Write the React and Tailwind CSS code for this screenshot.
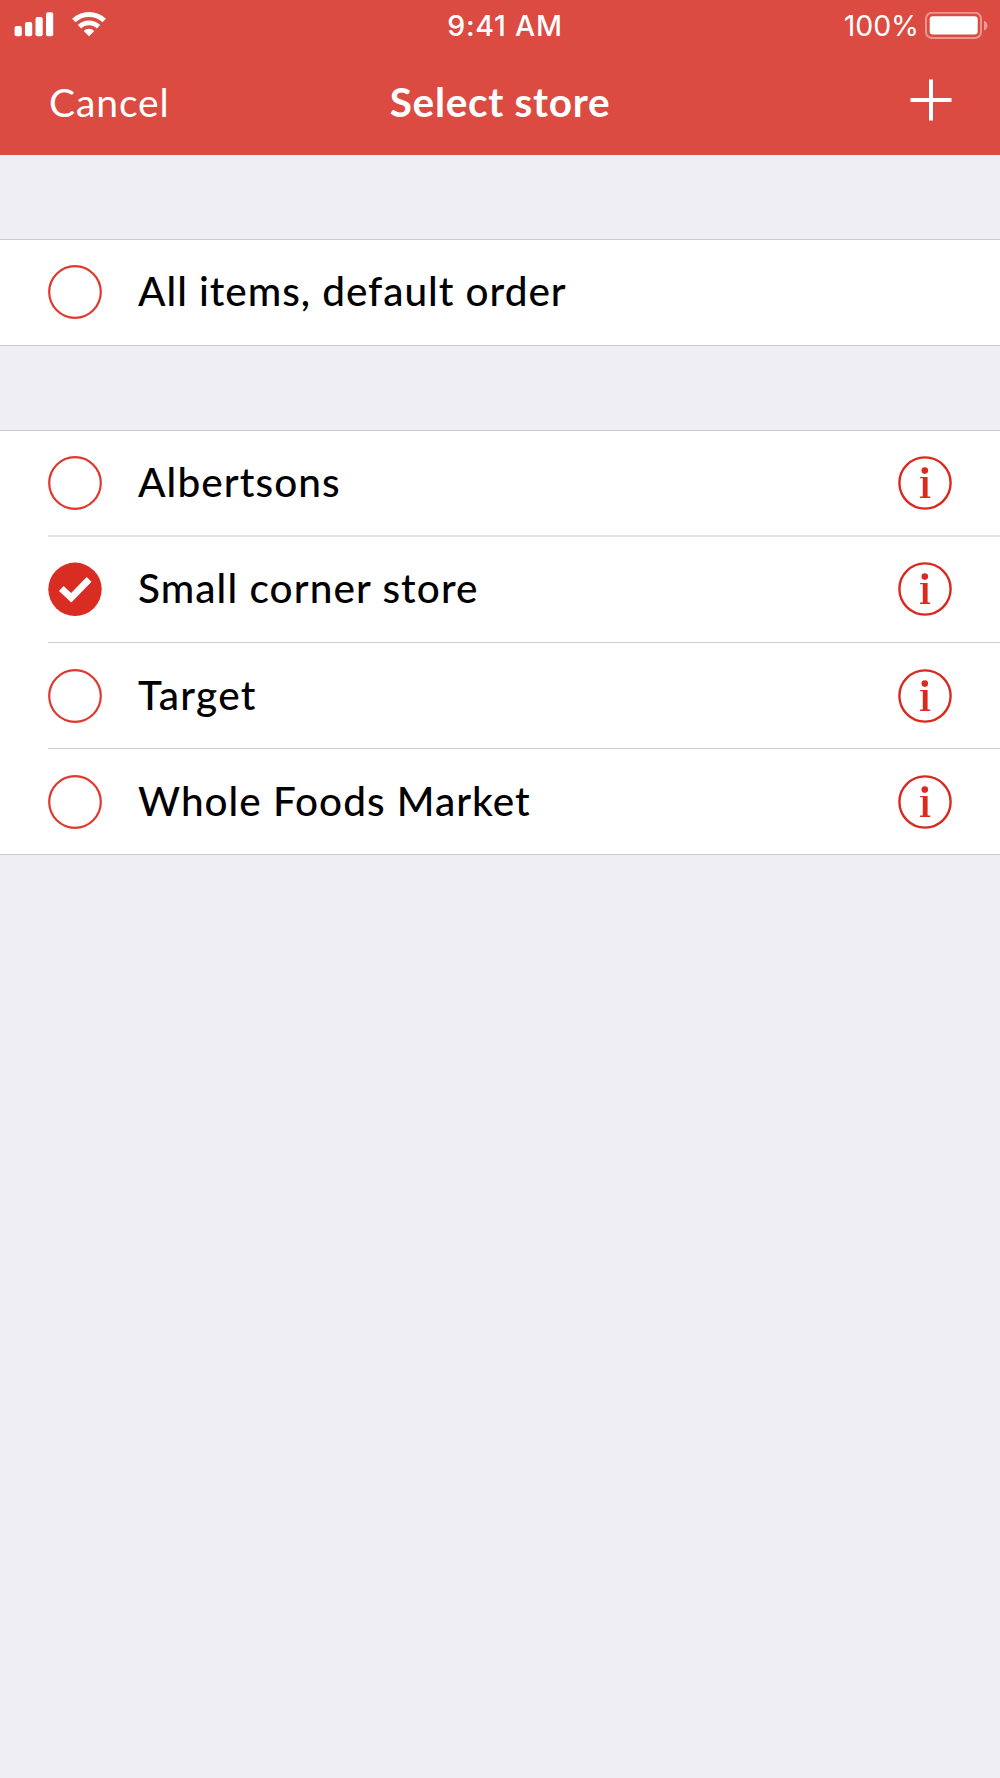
import { useState } from "react";

const stores = [
  { name: "Albertsons", row: "h-[104px]", line: "h-[2px] bg-[#e4e4e5]", spacing: "tracking-[1.1px]" },
  { name: "Small corner store", row: "h-[105px]", line: "h-px bg-[#cdcdcf]", spacing: "tracking-[1.1px]" },
  { name: "Target", row: "h-[105px] pt-[2px]", line: "h-px bg-[#cdcdcf]", spacing: "tracking-[1.3px]" },
  { name: "Whole Foods Market", row: "h-[105px] pt-[2px]", line: "", spacing: "tracking-[1px]" },
];

const SignalIcon = () => (
  <svg className="w-[40px] h-[25px]" viewBox="0 0 40 25" fill="white">
    <rect x="0.6" y="14" width="7.2" height="10.3" rx="2" />
    <rect x="11" y="10" width="7.2" height="14.3" rx="2" />
    <rect x="21.5" y="5" width="7.2" height="19.3" rx="2" />
    <rect x="32" y="0.2" width="7.2" height="24.1" rx="2" />
  </svg>
);

const WifiIcon = () => (
  <svg className="w-[34px] h-[25px]" viewBox="0 0 34 25" fill="none">
    <path d="M1.8 8.6a22 22 0 0 1 30.4 0" stroke="white" strokeWidth="4.9" />
    <path d="M7.5 14.8a13.6 13.6 0 0 1 19 0" stroke="white" strokeWidth="4.7" />
    <path d="M17 24.3l-5.3-5.3a7.6 7.6 0 0 1 10.6 0z" fill="white" />
  </svg>
);

const BatteryIcon = () => (
  <svg className="w-[64px] h-[28px]" viewBox="0 0 64 28" fill="none">
    <rect x="1" y="0.8" width="55" height="25.2" rx="6" stroke="white" strokeOpacity="0.42" strokeWidth="2" />
    <rect x="4.7" y="4.2" width="48" height="18.3" rx="3" fill="white" />
    <path d="M59 8.7c4.6 1.4 4.6 8.4 0 9.8z" fill="white" fillOpacity="0.45" />
  </svg>
);

const Check = ({ checked }) => (
  <svg className="w-[54px] h-[54px] -mt-[1px] shrink-0" viewBox="0 0 54 54" fill="none">
    {checked ? (
      <>
        <circle cx="27" cy="27.3" r="26.7" fill="#d92c23" />
        <path d="M13.3 26.5L23.2 35.8L41.1 17.3" stroke="white" strokeWidth="6.8" />
      </>
    ) : (
      <circle cx="27" cy="27" r="25.8" stroke="#e0382f" strokeWidth="2.2" />
    )}
  </svg>
);

const InfoIcon = () => (
  <svg className="w-[54px] h-[54px] -mt-[1px] shrink-0" viewBox="0 0 54 54" fill="none">
    <circle cx="27" cy="27" r="25.6" stroke="#da291f" strokeWidth="2.4" />
    <circle cx="26.8" cy="14.6" r="3.3" fill="#da291f" />
    <path
      d="M22.1 20.9h7.5v19.7h2.6v1.4H22.1v-1.4h2.7V22.3h-2.7z"
      fill="#da291f"
    />
  </svg>
);

const Row = ({ label, spacing, checked, onSelect, info }) => (
  <>
    <button onClick={onSelect} className="flex flex-1 items-center text-left">
      <Check checked={checked} />
      <span
        className={`ml-[36px] -mt-[3px] text-[40.5px] leading-[50px] font-medium whitespace-nowrap text-black ${spacing}`}
      >
        {label}
      </span>
    </button>
    {info && (
      <button>
        <InfoIcon />
      </button>
    )}
  </>
);

export default function App() {
  const [selected, setSelected] = useState("Small corner store");

  return (
    <div className="w-[1000px] h-[1778px] overflow-hidden bg-[#efeef4] font-['Lato',sans-serif]">
      <header className="h-[155px] bg-[#db4b42] text-white">
        {/* Status bar */}
        <div className="grid grid-cols-[1fr_auto_1fr] h-[50px] items-center pl-[14px] pr-[11px] font-['Inter',sans-serif] text-[28px] leading-[50px]">
          <div className="flex items-center gap-[18px] -mt-[2px]">
            <SignalIcon />
            <WifiIcon />
          </div>
          <span className="ml-[7px] pt-[1px] text-[28.5px] font-medium tracking-[0.75px]">9:41 AM</span>
          <div className="flex items-center justify-end gap-[6px]">
            <span className="pt-[1px] text-[28.5px] tracking-[-0.1px]">100%</span>
            <BatteryIcon />
          </div>
        </div>

        {/* Navigation */}
        <nav className="grid grid-cols-[1fr_auto_1fr] h-[105px] items-center pl-[48px] pr-[48px]">
          <button className="ml-[1px] -mt-[2px] justify-self-start text-[39px] leading-[50px] tracking-[0.9px]">
            Cancel
          </button>
          <h1 className="-mt-[2px] text-[40.5px] leading-[50px] font-bold tracking-[0.72px]">Select store</h1>
          <button className="justify-self-end">
            <svg className="w-[42px] h-[42px] -mt-[5px]" viewBox="0 0 42 42" stroke="white" strokeWidth="4">
              <path d="M0.5 21h41M21 0.5v41" />
            </svg>
          </button>
        </nav>
      </header>

      <main>
        <section className="mt-[84px] flex h-[107px] items-center border-y border-[#cbcbce] bg-white px-[48px]">
          <Row
            label="All items, default order"
            spacing="tracking-[0.97px]"
            checked={selected === null}
            onSelect={() => setSelected(null)}
          />
        </section>

        <section className="mt-[84px] border-y border-[#cbcbce] bg-white">
          {stores.map((store) => (
            <div key={store.name}>
              <div className={`flex items-center px-[48px] ${store.row}`}>
                <Row
                  label={store.name}
                  spacing={store.spacing}
                  checked={selected === store.name}
                  onSelect={() => setSelected(store.name)}
                  info
                />
              </div>
              {store.line && <div className={`ml-[48px] ${store.line}`} />}
            </div>
          ))}
        </section>
      </main>
    </div>
  );
}
